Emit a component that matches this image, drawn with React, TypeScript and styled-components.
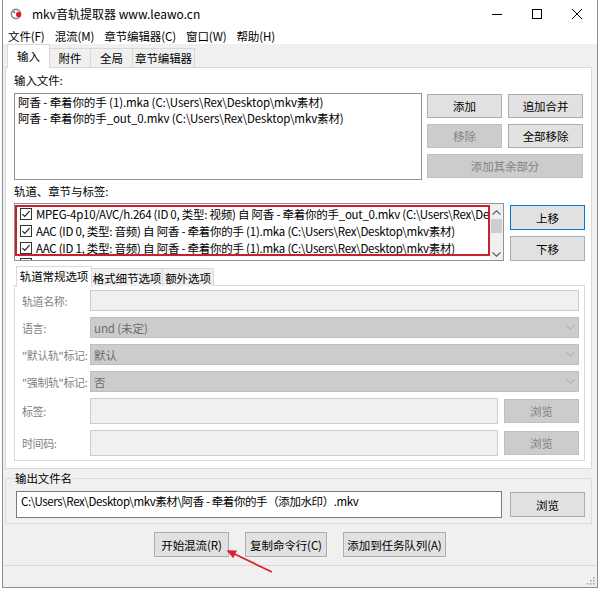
import React from "react";
import styled, { createGlobalStyle, css } from "styled-components";

const GlobalStyle = createGlobalStyle`
  html, body { margin: 0; padding: 0; background: #ffffff; }
  body {
    font-family: "Noto Sans CJK SC", "Noto Sans", sans-serif;
    font-size: 11.5px;
    letter-spacing: -0.1px;
    color: #000;
  }
  * { box-sizing: border-box; }
`;

const Screen = styled.div`
  position: relative;
  width: 600px;
  height: 589px;
  overflow: hidden;
`;

const Window = styled.div`
  margin-left: 2px;
  width: 596px;
  height: 588px;
  display: flex;
  flex-direction: column;
  background: #f0f0f0;
  border: 1px solid #8e8e8e;
  border-top: none;
`;

const TitleBar = styled.div`
  height: 28px;
  flex: none;
  display: flex;
  align-items: center;
  background: #fff;
`;

const AppIcon = styled.span`
  display: flex;
  margin-left: 7px;
`;

const Title = styled.span`
  margin-left: 8px;
  font-size: 12px;
  letter-spacing: 0;
  line-height: 16px;
`;

const WinControls = styled.div`
  margin-left: auto;
  display: flex;
  height: 100%;
`;

const ControlButton = styled.span`
  width: 40px;
  height: 28px;
  display: flex;
  align-items: center;
  justify-content: center;
`;

const MenuBar = styled.div`
  height: 16px;
  flex: none;
  display: flex;
  align-items: center;
  background: #fff;
`;

const MenuItem = styled.span`
  padding: 0 5px;
  line-height: 16px;
`;

const TabStrip = styled.div<{ $inset: number; $height: number; $gap?: number }>`
  height: ${(p) => p.$height}px;
  margin-top: ${(p) => p.$gap ?? 0}px;
  flex: none;
  display: flex;
  align-items: flex-end;
  padding-left: ${(p) => p.$inset}px;
  position: relative;
  z-index: 1;
`;

const Tab = styled.div<{ $active?: boolean; $width: number; $tall: number }>`
  width: ${(p) => p.$width}px;
  display: flex;
  align-items: center;
  justify-content: center;
  border: 1px solid #d9d9d9;
  border-bottom: none;
  line-height: 16px;
  white-space: nowrap;
  ${(p) =>
    p.$active
      ? css`
          height: ${p.$tall + 1}px;
          margin-bottom: -1px;
          background: #fff;
          padding-bottom: 2px;
        `
      : css`
          height: ${p.$tall - 4}px;
          margin-left: -1px;
          background: #f0f0f0;
        `}
`;

const TabPage = styled.div`
  margin-left: 2px;
  width: 587px;
  height: 402px;
  flex: none;
  background: #fff;
  border: 1px solid #d9d9d9;
  padding: 4px 8px 0 8px;
`;

const SectionLabel = styled.div<{ $gap?: number }>`
  height: 16px;
  line-height: 16px;
  margin-top: ${(p) => p.$gap ?? 0}px;
`;

const FileRow = styled.div`
  display: flex;
  align-items: flex-start;
  margin-top: 5px;
`;

const FileList = styled.div`
  width: 410px;
  height: 87px;
  border: 1px solid #8f9499;
  background: #fff;
  padding: 0 3px;
`;

const ListLine = styled.div`
  height: 16px;
  line-height: 16px;
  white-space: nowrap;
  overflow: hidden;
`;

const ButtonGrid = styled.div`
  margin: 1px 0 0 5px;
  display: grid;
  grid-template-columns: 75px 75px;
  grid-auto-rows: 24px;
  gap: 6px;
`;

const Button = styled.button<{ $disabled?: boolean; $focus?: boolean; $span?: boolean; $width?: number; $height?: number }>`
  font: inherit;
  letter-spacing: inherit;
  margin: 0;
  padding: 0;
  width: ${(p) => (p.$width ? `${p.$width}px` : "auto")};
  height: ${(p) => (p.$height ? `${p.$height}px` : "auto")};
  grid-column: ${(p) => (p.$span ? "1 / 3" : "auto")};
  background: ${(p) => (p.$disabled ? "#cccccc" : "#e1e1e1")};
  border: 1px solid ${(p) => (p.$focus ? "#0078d7" : p.$disabled ? "#bfbfbf" : "#adadad")};
  color: ${(p) => (p.$disabled ? "#838383" : "#000")};
  line-height: 16px;
  white-space: nowrap;
`;

const TrackRow = styled.div`
  display: flex;
  align-items: flex-start;
  margin-top: 4px;
`;

const TrackList = styled.div`
  width: 490px;
  height: 58px;
  display: flex;
  border: 1px solid #8f9499;
  background: #fff;
`;

const TrackRows = styled.div`
  position: relative;
  flex: 1;
  min-width: 0;
  overflow: hidden;
  padding-top: 1px;
  letter-spacing: -0.25px;
`;

const TrackLine = styled.div<{ $partial?: boolean }>`
  height: ${(p) => (p.$partial ? 4 : 17)}px;
  display: flex;
  align-items: ${(p) => (p.$partial ? "flex-start" : "center")};
  padding-top: ${(p) => (p.$partial ? 2 : 0)}px;
  gap: 4px;
  padding-left: 5px;
  white-space: nowrap;
  overflow: hidden;
  & > svg {
    flex: none;
  }
`;

const TrackText = styled.span`
  min-width: 0;
  overflow: hidden;
`;

const Highlight = styled.div`
  position: absolute;
  left: 0;
  top: 1px;
  width: 475px;
  height: 51px;
  border: 2px solid #c8202e;
  pointer-events: none;
`;

const ScrollBar = styled.div`
  width: 13px;
  flex: none;
  display: flex;
  flex-direction: column;
  align-items: center;
  background: #f0f0f0;
  padding: 6px 0 3px;
`;

const ScrollThumb = styled.div`
  width: 11px;
  height: 14px;
  margin-top: 4px;
  background: #cdcdcd;
`;

const ScrollFill = styled.div`
  flex: 1;
`;

const ButtonColumn = styled.div`
  margin: 2px 0 0 6px;
  display: flex;
  flex-direction: column;
  gap: 6px;
`;

const SubPage = styled.div`
  width: 571px;
  height: 176px;
  margin-top: -1px;
  border: 1px solid #d9d9d9;
  padding: 4px 5px 0 7px;
  display: grid;
  grid-template-columns: 68px 1fr;
  grid-template-rows: 21px 21px 21px 21px 26px 26px;
  row-gap: 6px;
  align-items: stretch;
`;

const FieldLabel = styled.span`
  display: flex;
  align-items: center;
  color: #7f7f7f;
  white-space: nowrap;
  font-size: 11px;
  letter-spacing: -0.4px;
`;

const Field = styled.div<{ $combo?: boolean }>`
  display: flex;
  align-items: center;
  padding: 0 3px;
  border: 1px solid ${(p) => (p.$combo ? "#bfbfbf" : "#cccccc")};
  background: ${(p) => (p.$combo ? "#cccccc" : "#f0f0f0")};
  color: #6d6d6d;
`;

const ComboText = styled.span`
  flex: 1;
`;

const FieldWithButton = styled.div`
  display: flex;
  gap: 6px;
  align-items: center;
  & > ${Field} {
    flex: 1;
    height: 100%;
  }
`;

const GroupBox = styled.fieldset`
  margin: 1px 0 0 2px;
  width: 587px;
  flex: none;
  border: 1px solid #dcdcdc;
  padding: 0 6px 5px 8px;
  min-width: 0;
`;

const Legend = styled.legend`
  padding: 0 1px;
  line-height: 16px;
`;

const OutputRow = styled.div`
  display: flex;
  align-items: center;
  gap: 8px;
  margin: 5px 0 0 2px;
`;

const OutputInput = styled.div`
  flex: 1;
  height: 27px;
  border: 1px solid #7a7a7a;
  background: #fff;
  padding: 1px 4px 0;
  line-height: 16px;
  letter-spacing: -0.4px;
  white-space: nowrap;
  overflow: hidden;
`;

const ActionBar = styled.div`
  margin-top: 8px;
  flex: none;
  display: flex;
  justify-content: center;
  gap: 16px;
`;

const StatusBar = styled.div`
  margin-top: 8px;
  flex: 1;
  border-top: 1px solid #dadada;
  display: flex;
  justify-content: flex-end;
  align-items: flex-end;
  padding: 0 1px 1px 0;
`;

const Overlay = styled.svg`
  position: absolute;
  left: 0;
  top: 0;
  pointer-events: none;
`;

const Check = () => (
  <svg width="12" height="12" viewBox="0 0 12 12">
    <rect x="0.5" y="0.5" width="11" height="11" fill="#fff" stroke="#333" />
    <path d="M2.4 6.1 L4.8 8.5 L9.6 3.2" fill="none" stroke="#222" strokeWidth="1.2" />
  </svg>
);

const Chevron = ({ up }: { up?: boolean }) => (
  <svg width="9" height="5" viewBox="0 0 9 5">
    <path d={up ? "M0.5 4.5 L4.5 0.8 L8.5 4.5" : "M0.5 0.5 L4.5 4.2 L8.5 0.5"} fill="none" stroke="#606060" strokeWidth="1.1" />
  </svg>
);

const ComboArrow = () => (
  <svg width="9" height="5" viewBox="0 0 9 5">
    <path d="M0.5 0.5 L4.5 4.2 L8.5 0.5" fill="none" stroke="#a8a8a8" strokeWidth="1" />
  </svg>
);

const tracks = [
  "MPEG-4p10/AVC/h.264 (ID 0, 类型: 视频) 自 阿香 - 牵着你的手_out_0.mkv (C:\\Users\\Rex\\Desktop\\mkv素材)",
  "AAC (ID 0, 类型: 音频) 自 阿香 - 牵着你的手 (1).mka (C:\\Users\\Rex\\Desktop\\mkv素材)",
  "AAC (ID 1, 类型: 音频) 自 阿香 - 牵着你的手 (1).mka (C:\\Users\\Rex\\Desktop\\mkv素材)",
];

const files = [
  "阿香 - 牵着你的手 (1).mka (C:\\Users\\Rex\\Desktop\\mkv素材)",
  "阿香 - 牵着你的手_out_0.mkv (C:\\Users\\Rex\\Desktop\\mkv素材)",
];

export default function App() {
  return (
    <Screen>
      <GlobalStyle />
      <Window>
        <TitleBar>
          <AppIcon>
            <svg width="14" height="14" viewBox="0 0 14 14">
              <circle cx="6" cy="7" r="4.6" fill="none" stroke="#8a8a8a" strokeWidth="1.6" />
              <circle cx="8.6" cy="7.4" r="2.6" fill="#d4202c" />
              <circle cx="4.2" cy="5.2" r="1" fill="#5a5a5a" />
            </svg>
          </AppIcon>
          <Title>mkv音轨提取器 www.leawo.cn</Title>
          <WinControls>
            <ControlButton>
              <svg width="10" height="10" viewBox="0 0 10 10">
                <path d="M0 5.5 H10" stroke="#000" strokeWidth="1" />
              </svg>
            </ControlButton>
            <ControlButton>
              <svg width="10" height="10" viewBox="0 0 10 10">
                <rect x="0.5" y="0.5" width="9" height="9" fill="none" stroke="#000" strokeWidth="1" />
              </svg>
            </ControlButton>
            <ControlButton>
              <svg width="10" height="10" viewBox="0 0 10 10">
                <path d="M0 0 L10 10 M10 0 L0 10" stroke="#000" strokeWidth="1" />
              </svg>
            </ControlButton>
          </WinControls>
        </TitleBar>

        <MenuBar>
          {["文件(F)", "混流(M)", "章节编辑器(C)", "窗口(W)", "帮助(H)"].map((m) => (
            <MenuItem key={m}>{m}</MenuItem>
          ))}
        </MenuBar>

        <TabStrip $inset={4} $height={23}>
          <Tab $active $width={43} $tall={23}>输入</Tab>
          <Tab $width={42} $tall={23}>附件</Tab>
          <Tab $width={43} $tall={23}>全局</Tab>
          <Tab $width={63} $tall={23}>章节编辑器</Tab>
        </TabStrip>

        <TabPage>
          <SectionLabel>输入文件:</SectionLabel>
          <FileRow>
            <FileList>
              {files.map((f) => (
                <ListLine key={f}>{f}</ListLine>
              ))}
            </FileList>
            <ButtonGrid>
              <Button>添加</Button>
              <Button>追加合并</Button>
              <Button $disabled>移除</Button>
              <Button>全部移除</Button>
              <Button $disabled $span>添加其余部分</Button>
            </ButtonGrid>
          </FileRow>

          <SectionLabel $gap={3}>轨道、章节与标签:</SectionLabel>
          <TrackRow>
            <TrackList>
              <TrackRows>
                {tracks.map((t) => (
                  <TrackLine key={t}>
                    <Check />
                    <TrackText>{t}</TrackText>
                  </TrackLine>
                ))}
                <TrackLine $partial>
                  <Check />
                </TrackLine>
                <Highlight />
              </TrackRows>
              <ScrollBar>
                <Chevron up />
                <ScrollThumb />
                <ScrollFill />
                <Chevron />
              </ScrollBar>
            </TrackList>
            <ButtonColumn>
              <Button $focus $width={75} $height={25}>上移</Button>
              <Button $width={75} $height={25}>下移</Button>
            </ButtonColumn>
          </TrackRow>

          <TabStrip $inset={2} $height={20} $gap={5}>
            <Tab $active $width={76} $tall={20}>轨道常规选项</Tab>
            <Tab $width={72} $tall={22}>格式细节选项</Tab>
            <Tab $width={52} $tall={22}>额外选项</Tab>
          </TabStrip>

          <SubPage>
            <FieldLabel>轨道名称:</FieldLabel>
            <Field />
            <FieldLabel>语言:</FieldLabel>
            <Field $combo>
              <ComboText>und (未定)</ComboText>
              <ComboArrow />
            </Field>
            <FieldLabel>"默认轨"标记:</FieldLabel>
            <Field $combo>
              <ComboText>默认</ComboText>
              <ComboArrow />
            </Field>
            <FieldLabel>"强制轨"标记:</FieldLabel>
            <Field $combo>
              <ComboText>否</ComboText>
              <ComboArrow />
            </Field>
            <FieldLabel>标签:</FieldLabel>
            <FieldWithButton>
              <Field />
              <Button $disabled $width={75} $height={24}>浏览</Button>
            </FieldWithButton>
            <FieldLabel>时间码:</FieldLabel>
            <FieldWithButton>
              <Field />
              <Button $disabled $width={75} $height={24}>浏览</Button>
            </FieldWithButton>
          </SubPage>
        </TabPage>

        <GroupBox>
          <Legend>输出文件名</Legend>
          <OutputRow>
            <OutputInput>C:\Users\Rex\Desktop\mkv素材\阿香 - 牵着你的手（添加水印）.mkv</OutputInput>
            <Button $width={75} $height={25}>浏览</Button>
          </OutputRow>
        </GroupBox>

        <ActionBar>
          <Button $width={75} $height={25}>开始混流(R)</Button>
          <Button $width={82} $height={25}>复制命令行(C)</Button>
          <Button $width={103} $height={25}>添加到任务队列(A)</Button>
        </ActionBar>

        <StatusBar>
          <svg width="10" height="10" viewBox="0 0 10 10">
            {[
              [8, 2],
              [5, 5],
              [8, 5],
              [2, 8],
              [5, 8],
              [8, 8],
            ].map(([x, y]) => (
              <rect key={`${x}-${y}`} x={x - 1} y={y - 1} width="1.6" height="1.6" fill="#a9a9a9" />
            ))}
          </svg>
        </StatusBar>
      </Window>

      <Overlay width="600" height="589" viewBox="0 0 600 589">
        <path d="M272 572 L235 554.3" stroke="#d4262c" strokeWidth="1.8" fill="none" />
        <polygon points="226.5,550.2 237,550.6 233.2,558.2" fill="#d4262c" />
      </Overlay>
    </Screen>
  );
}
